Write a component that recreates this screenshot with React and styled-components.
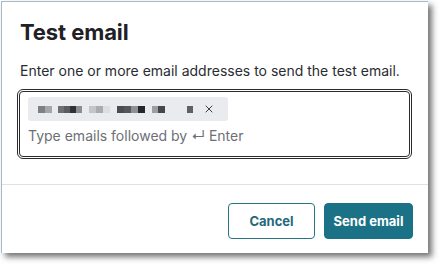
import React from "react";
import styled, { createGlobalStyle } from "styled-components";
import { X } from "lucide-react";

const Global = createGlobalStyle`
  html, body { margin: 0; padding: 0; background: #ffffff; }
  body { min-height: 264px; font-family: Inter, "Noto Sans", "Liberation Sans", sans-serif; color: #1f2126; }
  * { box-sizing: border-box; }
`;

const Page = styled.div`
  min-height: 264px;
  padding: 1px 0 0 1px;
`;

const Dialog = styled.div`
  width: 427px;
  height: 252px;
  background: #ffffff;
  border-left: 1px solid #a9b9c6;
  border-top: 1px solid #a9b9c6;
  box-shadow: 4px 4px 6px rgba(0, 0, 0, 0.55);
  display: flex;
  flex-direction: column;
`;

const Body = styled.div`
  padding: 16px 18px 27px 18px;
  display: flex;
  flex-direction: column;
  flex-shrink: 0;
`;

const Title = styled.h1`
  margin: 0;
  font-size: 22px;
  line-height: 28px;
  font-weight: 700;
  color: #1f2126;
  letter-spacing: -0.1px;
`;

const Description = styled.p`
  margin: 15px 0 0 0;
  font-size: 14px;
  line-height: 20px;
  color: #2a2c31;
`;

const InputBox = styled.div`
  margin-top: 10px;
  margin-left: -1px;
  width: 391px;
  height: 66px;
  border: 1px solid #2a2b2e;
  border-radius: 4px;
  outline: 1px solid #2a2b2e;
  outline-offset: 1px;
  padding: 5px 8px 0 8px;
  display: flex;
  flex-direction: column;
  gap: 5px;
  align-items: flex-start;
`;

const Chip = styled.div`
  height: 24px;
  width: 200px;
  background: #e9ebee;
  border-radius: 3px;
  display: flex;
  align-items: center;
  padding: 0 0 0 10px;
`;

const Blur = styled.span`
  display: inline-block;
  width: ${(p) => p.$w}px;
  height: 7px;
  background: ${(p) => p.$c};
  margin-left: ${(p) => p.$gap || 0}px;
`;

const ChipClose = styled.span`
  display: inline-flex;
  margin-left: 10px;
  color: #2b2d31;
`;

const Placeholder = styled.div`
  font-size: 14px;
  line-height: 20px;
  color: #6c7076;
`;

const Divider = styled.hr`
  margin: 0;
  border: none;
  border-top: 1px solid #dfe1e4;
  flex-shrink: 0;
`;

const Footer = styled.div`
  display: flex;
  justify-content: flex-end;
  gap: 9px;
  padding: 18px 15px 0 0;
`;

const Button = styled.button`
  height: 36px;
  width: ${(p) => (p.$primary ? "89px" : "87px")};
  padding: 0;
  border-radius: 4px;
  font-family: inherit;
  font-size: 13px;
  font-weight: 700;
  border: 1px solid ${(p) => (p.$primary ? "#1b7286" : "#2a7485")};
  background: ${(p) => (p.$primary ? "#1b7286" : "#ffffff")};
  color: ${(p) => (p.$primary ? "#ffffff" : "#1f6a7b")};
  cursor: pointer;
`;

const blocks = [
  { w: 7, c: "#7d7f84" }, { w: 7, c: "#a4a6aa" },
  { w: 6, c: "#6d6f74", gap: 6 }, { w: 6, c: "#5a5c61" }, { w: 6, c: "#2f3136" }, { w: 6, c: "#8b8d92" },
  { w: 7, c: "#c3c5c9", gap: 7 }, { w: 7, c: "#a9abaf" }, { w: 7, c: "#dcdee1" },
  { w: 7, c: "#4a4c51", gap: 7 }, { w: 7, c: "#55575c" }, { w: 7, c: "#8e9095" }, { w: 7, c: "#25272b" },
  { w: 6, c: "#9c9ea2", gap: 7 }, { w: 7, c: "#45474c" },
  { w: 6, c: "#5e6065", gap: 22 },
];

export default function App() {
  return (
    <Page>
      <Global />
      <Dialog>
        <Body>
          <Title>Test email</Title>
          <Description>Enter one or more email addresses to send the test email.</Description>
          <InputBox>
            <Chip>
              {blocks.map((b, i) => (
                <Blur key={i} $w={b.w} $c={b.c} $gap={b.gap} />
              ))}
              <ChipClose>
                <X size={12} strokeWidth={1.8} />
              </ChipClose>
            </Chip>
            <Placeholder>Type emails followed by ↵ Enter</Placeholder>
          </InputBox>
        </Body>
        <Divider />
        <Footer>
          <Button>Cancel</Button>
          <Button $primary>Send email</Button>
        </Footer>
      </Dialog>
    </Page>
  );
}
